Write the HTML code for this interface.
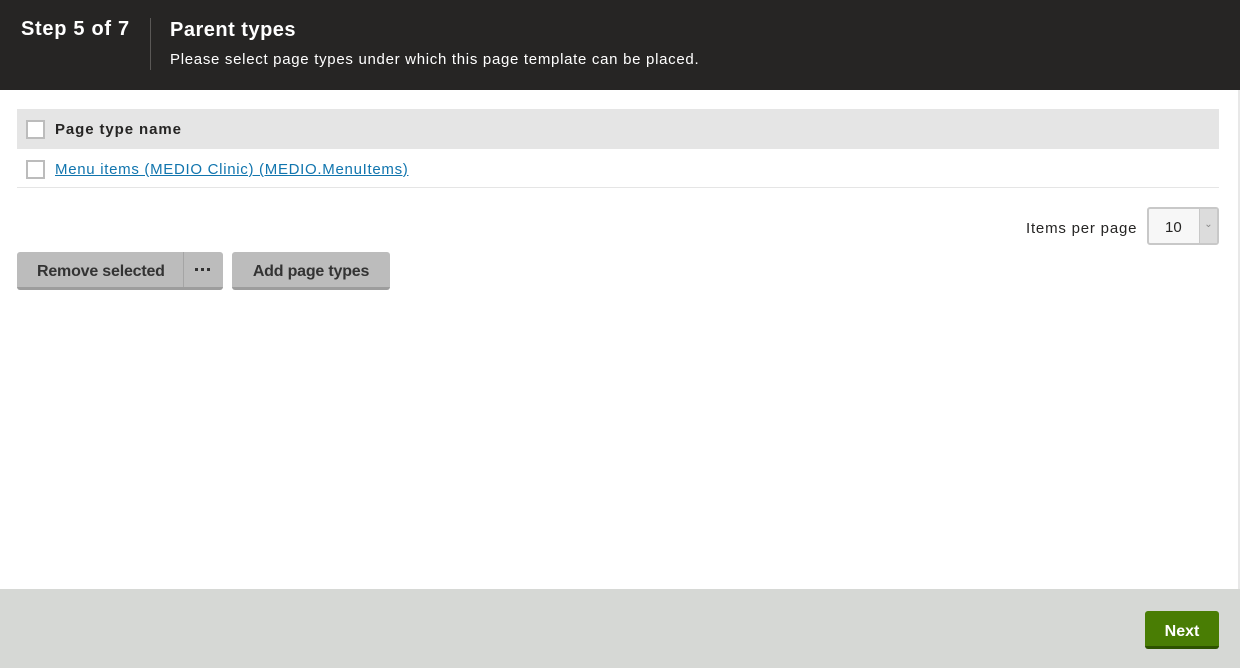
<!DOCTYPE html>
<html><head><style>
*{box-sizing:border-box;margin:0;padding:0}
body{width:1240px;height:668px;overflow:hidden;background:#fff;font-family:"Liberation Sans",sans-serif;color:#262524;position:relative}
.hdr{position:absolute;left:0;top:0;width:1240px;height:90px;background:#262524;color:#fff}
.step{position:absolute;left:21px;top:18px;font-size:20px;font-weight:bold;letter-spacing:0.7px}
.sep{position:absolute;left:150px;top:18px;width:1px;height:52px;background:#5a5856}
.title{position:absolute;left:170px;top:19px;font-size:20px;font-weight:bold;letter-spacing:0.5px}
.desc{position:absolute;left:170px;top:51px;font-size:15px;letter-spacing:0.7px}
.th{position:absolute;left:17px;top:109px;width:1202px;height:40px;background:#e5e5e5}
.cb{position:absolute;width:19px;height:19px;border:2px solid #bcbcbc;background:#fff}
.thtext{position:absolute;left:55px;top:121px;font-size:15px;font-weight:bold;letter-spacing:0.9px}
.row{position:absolute;left:17px;top:149px;width:1202px;height:39px;border-bottom:1px solid #e5e5e5}
.link{position:absolute;left:55px;top:161px;font-size:15px;color:#1175ae;text-decoration:underline;letter-spacing:0.7px}
.ipp{position:absolute;left:1026px;top:220px;font-size:15px;letter-spacing:0.8px}
.sel{position:absolute;left:1147px;top:207px;width:72px;height:38px;border:2px solid #c8c8c8;border-radius:3px;background:#f7f7f7}
.sel span{position:absolute;left:16px;top:10px;font-size:15px}
.sel i{position:absolute;right:0;top:0;width:18px;height:34px;background:#dcdcdc;border-left:1px solid #c8c8c8;font-style:normal;font-size:10px;color:#888;text-align:center;line-height:32px}
.btn{position:absolute;top:252px;height:38px;background:#bcbcbc;border-bottom:3px solid #9d9d9d;border-radius:3px;font-size:16px;font-weight:bold;line-height:40px;color:#333;text-align:center;letter-spacing:-0.2px}
.foot{position:absolute;left:0;top:589px;width:1240px;height:79px;background:#d6d8d5}
.next{position:absolute;left:1145px;top:611px;width:74px;height:38px;background:#497d04;border-bottom:3px solid #2d5200;border-radius:3px;color:#fff;font-size:16px;font-weight:bold;text-align:center;line-height:41px}
.rb{position:absolute;left:1238px;top:90px;width:2px;height:499px;background:#e8e8e8}
.dot{position:absolute;top:16px;width:3px;height:3px;background:#333}
</style></head><body>
<div class="hdr">
<div class="step">Step 5 of 7</div><div class="sep"></div>
<div class="title">Parent types</div>
<div class="desc">Please select page types under which this page template can be placed.</div>
</div>
<div class="th"></div>
<div class="cb" style="left:26px;top:120px"></div>
<div class="thtext">Page type name</div>
<div class="row"></div>
<div class="cb" style="left:26px;top:160px"></div>
<div class="link">Menu items (MEDIO Clinic) (MEDIO.MenuItems)</div>
<div class="ipp">Items per page</div>
<div class="sel"><span>10</span><i>&#8964;</i></div>
<div class="btn" style="left:17px;width:206px;text-align:left"><span style="position:absolute;left:20px">Remove selected</span><span style="position:absolute;left:166px;top:0;width:1px;height:35px;background:#a5a5a5"></span><span class="dot" style="left:178px"></span><span class="dot" style="left:184px"></span><span class="dot" style="left:190px"></span></div>
<div class="btn" style="left:232px;width:158px">Add page types</div>
<div class="rb"></div>
<div class="foot"></div>
<div class="next">Next</div>
</body></html>
